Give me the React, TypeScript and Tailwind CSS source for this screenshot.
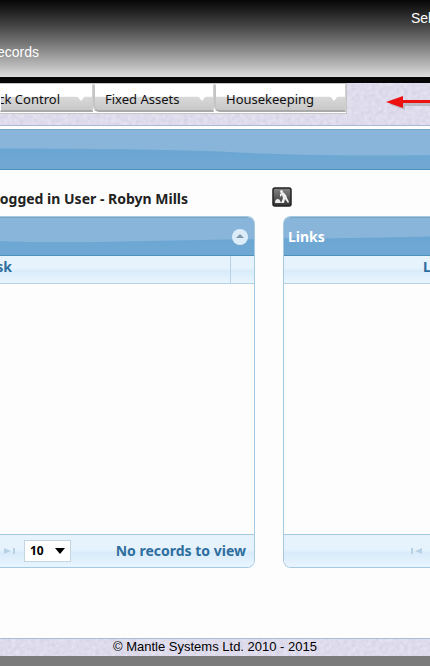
import type { ReactNode } from "react";

function Texture({ id }: { id: string }) {
  return (
    <svg className="absolute inset-0 h-full w-full" aria-hidden="true">
      <filter id={id} x="0" y="0" width="100%" height="100%" colorInterpolationFilters="sRGB">
        <feTurbulence type="fractalNoise" baseFrequency="0.25" numOctaves="2" seed="4" />
        <feColorMatrix values="0.1 0 0 0 0.82  0.1 0 0 0 0.81  0.07 0 0 0 0.89  0 0 0 0 1" />
      </filter>
      <rect width="100%" height="100%" filter={`url(#${id})`} />
    </svg>
  );
}

function MenuButton({ label, className }: { label: string; className: string }) {
  return (
    <button
      type="button"
      className={`flex h-7 shrink-0 items-center overflow-hidden border border-white border-r-[#d0d0d0] border-b-2 border-b-[#a9a9a9] bg-linear-to-b from-white from-45% via-[#d8d8d8] via-50% to-[#c8c8c8] pt-0.5 pr-1.5 font-['Noto_Sans',sans-serif] text-[13px] leading-5 whitespace-nowrap text-[#111] ${className}`}
    >
      <span>{label}</span>
      <svg className="h-2 w-2.5 shrink-0" viewBox="0 0 10 8" aria-hidden="true">
        <path d="M1 1h8L5 6z" fill="#fff" />
      </svg>
    </button>
  );
}

function Gloss({ className, path, children }: { className: string; path: string; children?: ReactNode }) {
  return (
    <div className={`relative overflow-hidden border-y border-[#4d8fbd] border-t-[#76a8c6] bg-linear-to-b from-[#66a5d5] to-[#70a8d2] ${className}`}>
      <svg className="absolute inset-0 h-full w-full" viewBox="0 0 430 40" preserveAspectRatio="none" aria-hidden="true">
        <path d={path} fill="#88b5d9" />
      </svg>
      <div className="relative flex h-full items-center">{children}</div>
    </div>
  );
}

function PageArrow({ last }: { last?: boolean }) {
  return (
    <svg className="h-2 w-3 shrink-0" viewBox="0 0 12 8" fill="#b7d2e5" aria-hidden="true">
      {last ? <path d="M0 1v6l7-3zM9 1h2v6H9z" /> : <path d="M12 1v6L5 4zM1 1h2v6H1z" />}
    </svg>
  );
}

const pale = "bg-linear-to-b from-[#e6f3fd] from-45% via-[#d9ebfa] via-55% to-[#e8f5ff]";

export default function App() {
  return (
    <div className="min-h-screen overflow-hidden bg-[#7b7b7b] font-['Noto_Sans',sans-serif]">
      <header className="h-[83px] border-b-[6px] border-[#060606] bg-linear-to-b from-[#080808] to-[#dedede] font-['Liberation_Sans',sans-serif] text-sm text-white">
        <div className="flex justify-end pt-2">
          <div className="w-[19px] overflow-hidden leading-5 whitespace-nowrap">Sel</div>
        </div>
        <div className="mt-3 flex w-[39px] justify-end overflow-hidden leading-6">ecords</div>
      </header>

      <nav className="relative h-[43px] border-b border-[#a9b9d3]">
        <Texture id="nav-grain" />
        <div className="relative flex">
          <div className="flex border border-l-0 border-[#c6c6c6] bg-white pb-px">
            <MenuButton label="ck Control" className="w-[93px] justify-end gap-4" />
            <MenuButton label="Fixed Assets" className="w-[121px] justify-between rounded-bl-md border-l-2 border-l-[#c4c4c4] pl-2.5" />
            <MenuButton label="Housekeeping" className="w-[132px] justify-between rounded-bl-md border-l-2 border-l-[#c4c4c4] pl-2.5" />
          </div>
          <svg className="mt-3 ml-auto h-4 w-11" viewBox="0 0 44 16" aria-hidden="true">
            <path d="M3 9l16-4v3h25v3H19v4z" fill="#999" opacity=".5" />
            <path d="M0 7l17-6v4h27v3H17v5z" fill="#ed1111" />
          </svg>
        </div>
      </nav>

      <main className="bg-[#fdfdfd] pt-[3px]">
        <Gloss className="h-[41px]" path="M0 0H430V26Q300 27 220 22Q140 19 0 19Z" />

        <div className="flex h-[46px] items-center gap-[84px] pt-2 text-sm font-bold text-[#222]">
          <div className="flex w-[188px] justify-end overflow-hidden pt-1 whitespace-nowrap">ogged in User - Robyn Mills</div>
          <button type="button" aria-label="Work in progress">
            <svg className="h-5 w-5" viewBox="0 0 20 20">
              <defs>
                <linearGradient id="badge" x2="0" y2="1">
                  <stop stopColor="#858585" />
                  <stop offset="1" stopColor="#333" />
                </linearGradient>
              </defs>
              <rect x="1" y="1" width="18" height="18" rx="2" fill="url(#badge)" stroke="#222" strokeWidth="1.5" />
              <circle cx="9.500" cy="4.500" r="1.500" fill="#eee" />
              <path d="M8 7l3-2 3 3 1 3 2 4-1 1-3-4-1 4H9l2-5-1-3-2 2z" fill="#eee" />
              <path d="M3 16q0-4 3-4 2 0 3 4z" fill="#eee" />
            </svg>
          </button>
        </div>

        <div className="flex gap-7">
          <section className="w-[255px] shrink-0 overflow-hidden rounded-r-lg border border-l-0 border-[#a6c9e2]">
            <Gloss className="h-[39px]" path="M0 0H430V23Q290 24 170 26Q90 27 0 25Z">
              <button type="button" aria-label="Collapse" className="mr-1.5 ml-auto h-4 w-4">
                <svg className="h-4 w-4" viewBox="0 0 16 16">
                  <circle cx="8" cy="8" r="8" fill="#dcecf9" />
                  <path d="M4 9l4-4 4 4z" fill="#8497a8" />
                </svg>
              </button>
            </Gloss>
            <div className={`flex h-7 border-b border-[#b7d2e5] ${pale} text-sm leading-[22px] font-bold text-[#2e6e9e]`}>
              <div className="flex w-3 justify-end overflow-hidden">sk</div>
              <div className="ml-auto w-6 border-l border-[#b7d2e5]" />
            </div>
            <div className="h-[250px]" />
            <div className={`flex h-[33px] items-center border-t border-[#a6c9e2] ${pale} pr-2 pl-1`}>
              <PageArrow last />
              <div className="relative ml-2">
                <select aria-label="Rows per page" className="block h-[22px] w-[47px] appearance-none border border-[#c5d5df] bg-white pl-[5px] text-xs font-bold text-black">
                  <option>10</option>
                </select>
                <svg className="pointer-events-none absolute top-2 right-1.5 h-1.5 w-2.5" viewBox="0 0 10 6" aria-hidden="true">
                  <path d="M0 0h10L5 6z" />
                </svg>
              </div>
              <div className="ml-auto text-sm font-bold whitespace-nowrap text-[#2e6e9e]">No records to view</div>
            </div>
          </section>

          <section className="min-w-0 flex-1 overflow-hidden rounded-l-lg border border-r-0 border-[#a6c9e2]">
            <Gloss className="h-[39px]" path="M0 0H430V20Q290 21 150 22Q90 22 0 22Z">
              <h2 className="pl-1 text-sm font-bold text-white">Links</h2>
            </Gloss>
            <div className={`flex h-7 justify-end border-b border-[#b7d2e5] ${pale} text-sm leading-[22px] font-bold text-[#2e6e9e]`}>
              <div className="w-[7px] overflow-hidden">L</div>
            </div>
            <div className="h-[250px]" />
            <div className={`flex h-[33px] items-center justify-end border-t border-[#a6c9e2] ${pale} pr-2`}>
              <PageArrow />
            </div>
          </section>
        </div>
        <div className="h-[70px]" />
      </main>

      <footer className="relative h-[18px] border-t border-[#a6bfd5] text-center font-['Liberation_Sans',sans-serif] text-[13px] leading-4 text-black">
        <Texture id="footer-grain" />
        <span className="relative">© Mantle Systems Ltd. 2010 - 2015</span>
      </footer>
    </div>
  );
}
